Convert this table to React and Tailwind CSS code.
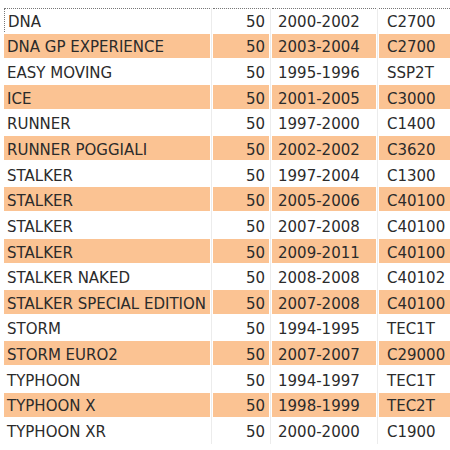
import React from "react";

const rows = [
  ["DNA", "50", "2000-2002", "C2700"],
  ["DNA GP EXPERIENCE", "50", "2003-2004", "C2700"],
  ["EASY MOVING", "50", "1995-1996", "SSP2T"],
  ["ICE", "50", "2001-2005", "C3000"],
  ["RUNNER", "50", "1997-2000", "C1400"],
  ["RUNNER POGGIALI", "50", "2002-2002", "C3620"],
  ["STALKER", "50", "1997-2004", "C1300"],
  ["STALKER", "50", "2005-2006", "C40100"],
  ["STALKER", "50", "2007-2008", "C40100"],
  ["STALKER", "50", "2009-2011", "C40100"],
  ["STALKER NAKED", "50", "2008-2008", "C40102"],
  ["STALKER SPECIAL EDITION", "50", "2007-2008", "C40100"],
  ["STORM", "50", "1994-1995", "TEC1T"],
  ["STORM EURO2", "50", "2007-2007", "C29000"],
  ["TYPHOON", "50", "1994-1997", "TEC1T"],
  ["TYPHOON X", "50", "1998-1999", "TEC2T"],
  ["TYPHOON XR", "50", "2000-2000", "C1900"],
];

function Gap() {
  return (
    <div className="w-[3px] flex justify-center">
      <div className="w-px h-full bg-[#ececec]" />
    </div>
  );
}

export default function App() {
  return (
    <div
      className="w-[450px] h-[450px] overflow-hidden bg-white text-[15px] text-[#2b2b2b]"
      style={{ fontFamily: '"DejaVu Sans", sans-serif' }}
    >
      <div className="h-[8px]" />
      {rows.map((r, i) => {
        const hi = i % 2 === 1;
        const bg = hi ? "bg-[#fbc393]" : "bg-white";
        const top = i === 0 ? "border-t border-dotted border-[#777]" : "";
        return (
          <div key={i} className="flex h-[25.65px]">
            <div className="w-[4px]" />
            <div
              className={`w-[206px] h-[24px] flex items-center pl-[3px] pt-[4px] ${bg} ${top} ${
                i === 0 ? "border-l border-dotted border-[#777]" : ""
              }`}
            >
              {r[0]}
            </div>
            <Gap />
            <div className={`w-[56px] h-[24px] flex items-center justify-end pr-[4px] pt-[4px] ${bg} ${top}`}>
              {r[1]}
            </div>
            <Gap />
            <div className={`w-[104px] h-[24px] flex items-center pl-[6px] pt-[4px] ${bg} ${top}`}>
              {r[2]}
            </div>
            <Gap />
            <div className={`flex-1 h-[24px] flex items-center pl-[8px] pt-[4px] ${bg} ${top}`}>
              {r[3]}
            </div>
          </div>
        );
      })}
    </div>
  );
}
